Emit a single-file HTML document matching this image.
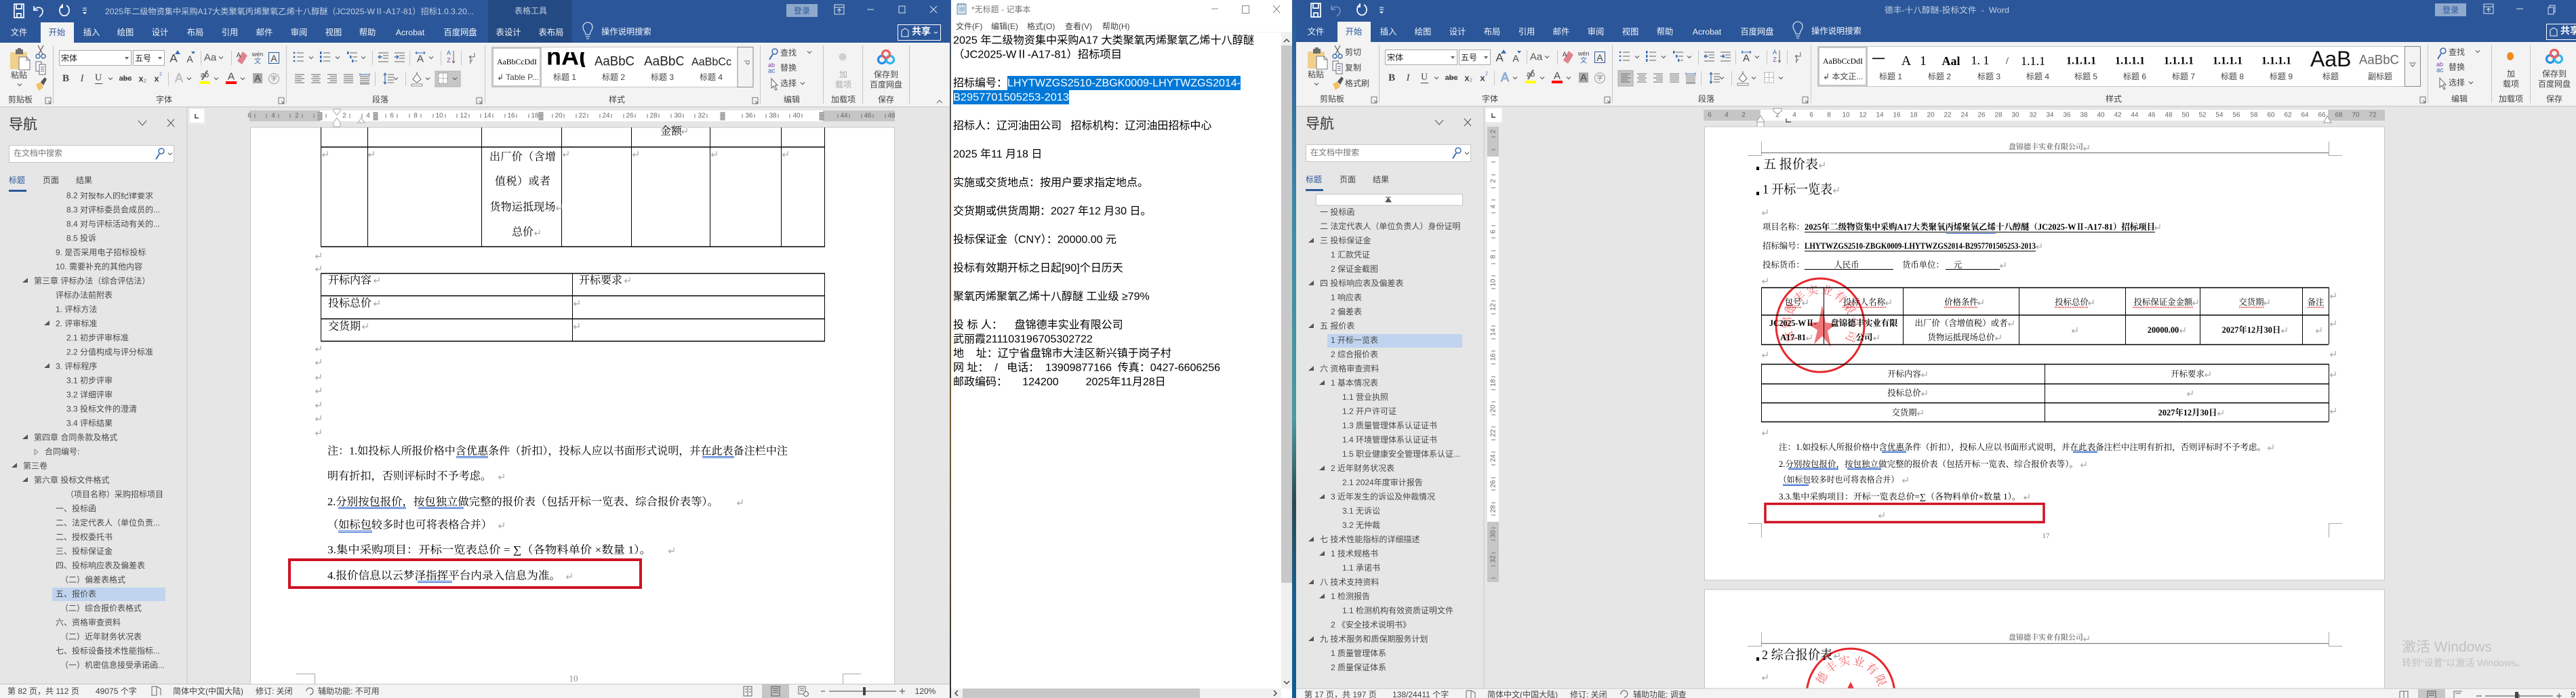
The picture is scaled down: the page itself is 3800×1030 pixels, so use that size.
<!DOCTYPE html>
<html lang="zh-CN"><head><meta charset="utf-8"><title>Word and Notepad</title>
<style>
html,body{margin:0;padding:0;width:3800px;height:1030px;overflow:hidden;background:#e6e6e6}
svg{display:block}
text{font-family:"Liberation Sans","Noto Sans CJK SC",sans-serif;font-size:12px;fill:#444;dominant-baseline:central;white-space:pre}
.m{text-anchor:middle}
.w{fill:#fff}
.t{fill:#c3cfe2}
.tab{fill:#f2f5fa;font-size:12.3px}
.tree{fill:#4a4a4a}
.gr{fill:#666;font-size:10px;text-anchor:middle}
.d{font-family:"Liberation Serif","Noto Serif CJK SC",serif;fill:#000;font-size:16px}
.s{font-family:"Liberation Serif","Noto Serif CJK SC",serif;fill:#000;font-size:12.4px}
.b{font-weight:700}
.h{font-family:"Liberation Serif","Noto Serif CJK SC",serif;fill:#000;font-size:19px}
.n{fill:#000;font-size:16px}
.l{stroke:#c6c6c6;fill:none}
.i{stroke:#666;fill:none;stroke-width:1.1}
.k{stroke:#000;fill:none;stroke-width:1}
.kk{stroke:#000;fill:none;stroke-width:1.6}
.cm{stroke:#a8a8a8;fill:none;stroke-width:1}
.so{font-family:"Liberation Serif","Noto Serif CJK SC",serif;fill:#222}
</style></head><body>
<svg width="3800" height="1030" viewBox="0 0 3800 1030" xmlns="http://www.w3.org/2000/svg">
<defs>
<linearGradient id="wp" x1="0" y1="0" x2="0" y2="1"><stop offset="0" stop-color="#2b579a"/><stop offset=".3" stop-color="#3d8aa8"/><stop offset=".6" stop-color="#4a9aa0"/><stop offset=".72" stop-color="#2a4a52"/><stop offset=".85" stop-color="#1a6090"/><stop offset="1" stop-color="#0f5c94"/></linearGradient>
<linearGradient id="wp2" x1="0" y1="0" x2="0" y2="1"><stop offset="0" stop-color="#2b579a"/><stop offset=".1" stop-color="#555"/><stop offset=".6" stop-color="#7c5a34"/><stop offset="1" stop-color="#333"/></linearGradient>
<pattern id="hatch" width="4" height="2" patternUnits="userSpaceOnUse"><rect width="4" height="1" fill="#777"/><rect y="1" width="4" height="1" fill="#ddd"/></pattern>

<path id="pm" d="M4 -4V1.5H-3.5M-3.5 1.5l2.8 -2.6M-3.5 1.5l2.8 2.6" fill="none" stroke="#a8a8a8" stroke-width="1.2"/>
<path id="cr" d="M-3 -1.5L0 1.5L3 -1.5" fill="none" stroke="#555" stroke-width="1.1"/>
<path id="lau" d="M-4 -5H4V4H-4ZM0 0L3.5 3.5M3.5 0.5V3.5H0.5" fill="none" stroke="#777" stroke-width="1"/>
<polygon id="tri" points="-4,3 4,3 4,-4" fill="#555"/>
<polygon id="tro" points="-2,-4 3,0 -2,4" fill="none" stroke="#888"/>

<g id="save"><path d="M-7 -10H7V10H-7Z M-4 -10V-3H4V-10 M-3 10V4H3V10" fill="none" stroke="#fff" stroke-width="1.7"/></g>
<g id="undo"><path d="M-6 -6L-6 0L0 0 M-6 0C-2 -6 7 -5 7 2C7 6 4 8 2 10" fill="none" stroke="#eef" stroke-width="1.8"/></g>
<g id="redo"><path d="M3 -8A7 8 0 1 1 -3 -8M-3 -10V-5H-7" fill="none" stroke="#fff" stroke-width="1.7"/></g>
<g id="cust"><path d="M-3 -4H3M-3 -1H3" stroke="#fff" fill="none"/><polygon points="-3,2 3,2 0,5" fill="#fff"/></g>
<g id="bulb"><path d="M-3 9H3M-2 12H2M-3 6C-3 2 -7 0 -7 -5A7 7 0 0 1 7 -5C7 0 3 2 3 6Z" fill="none" stroke="#eef2f8" stroke-width="1.1"/></g>

<g id="paste"><rect x="0" y="4" width="25" height="25" fill="#f1d08c" rx="1"/><rect x="8" y="0" width="11" height="7" fill="#6e6e6e"/><rect x="11" y="-2" width="5" height="4" fill="#6e6e6e"/><path d="M13 11H24L29 16V30H13Z" fill="#fff" stroke="#777"/><path d="M24 11V16H29" fill="none" stroke="#777"/></g>
<g id="cut"><circle cx="-4" cy="7" r="3" fill="none" stroke="#3a6aa8" stroke-width="1.4"/><circle cx="4" cy="7" r="3" fill="none" stroke="#3a6aa8" stroke-width="1.4"/><path d="M-3 4L4 -9M3 4L-4 -9" stroke="#666" stroke-width="1.3" fill="none"/></g>
<g id="copy"><path d="M-7 -9H1V5H-7Z" fill="#fff" stroke="#667"/><path d="M-2 -5H7V10H-2Z" fill="#fff" stroke="#667"/><path d="M0 -1H5M0 2H5M0 5H5" stroke="#557" fill="none"/></g>
<g id="fmt"><path d="M-7 2L0 -2L4 6L-3 11Z" fill="#f1c164"/><path d="M0 -2L6 -9L9 -6L4 3Z" fill="#555"/></g>

<g id="bul"><g fill="#3b6cb0"><circle cx="-7" cy="-6" r="1.4"/><circle cx="-7" cy="0" r="1.4"/><circle cx="-7" cy="6" r="1.4"/></g><path d="M-3 -6H7M-3 0H7M-3 6H7" class="i"/></g>
<g id="num"><g fill="#3b6cb0" font-size="6"><rect x="-8" y="-8" width="2.5" height="4"/><rect x="-8" y="-2" width="2.5" height="4"/><rect x="-8" y="4" width="2.5" height="4"/></g><path d="M-3 -6H7M-3 0H7M-3 6H7" class="i"/></g>
<g id="mul"><g fill="#3b6cb0"><rect x="-8" y="-8" width="2.5" height="4"/><rect x="-4" y="-2" width="2.5" height="4"/><rect x="-1" y="4" width="2.5" height="4"/></g><path d="M-4 -6H7M0 0H7M3 6H7" class="i"/></g>
<g id="out"><path d="M-7 -7H8M0 -3H8M0 1H8M-7 6H8" class="i"/><path d="M-1 -1H-7M-7 -1l3 -2.500M-7 -1l3 2.500" fill="none" stroke="#3b6cb0" stroke-width="1.4"/></g>
<g id="ind"><path d="M-7 -7H8M0 -3H8M0 1H8M-7 6H8" class="i"/><path d="M-7 -1H-1M-1 -1l-3 -2.500M-1 -1l-3 2.500" fill="none" stroke="#3b6cb0" stroke-width="1.4"/></g>
<g id="al"><path d="M-7 -6H7M-7 -3H3M-7 0H7M-7 3H3M-7 6H7" class="i"/></g>
<g id="ac"><path d="M-7 -6H7M-5 -3H5M-7 0H7M-5 3H5M-7 6H7" class="i"/></g>
<g id="ar"><path d="M-7 -6H7M-3 -3H7M-7 0H7M-3 3H7M-7 6H7" class="i"/></g>
<g id="aj"><path d="M-7 -6H7M-7 -3H7M-7 0H7M-7 3H7M-7 6H7" class="i"/></g>
<g id="ad"><path d="M-7 -3H7M-7 0H7M-7 3H7M-7 6H7M-7 8H7" class="i"/><path d="M-7 -8V-4M7 -8V-4M-6 -6H6" stroke="#3b6cb0" fill="none"/></g>
<g id="ls"><path d="M-1 -6H8M-1 -2H8M-1 2H8M-1 6H8" class="i"/><path d="M-5 -8V8M-7 -5L-5 -8L-3 -5M-7 5L-5 8L-3 5" fill="none" stroke="#3b6cb0" stroke-width="1.2"/></g>
<g id="fill"><path d="M-5 2L1 -6L7 2L1 7Z" fill="#fff" stroke="#666"/><path d="M1 -6V-9" stroke="#666"/><rect x="-7" y="9" width="16" height="3" fill="#fff" stroke="#888"/></g>
<g id="bord"><rect x="-6" y="-7" width="13" height="15" fill="#fff" stroke="#777" stroke-dasharray="1.5 1.5"/><path d="M-6 0.5H7M0.500 -7V8" stroke="#777" stroke-dasharray="1.5 1.5"/></g>

<g id="fontpara">
<path class="l" d="M296.500 75V96M341.500 75V96M248.500 106V127M549.500 75V96M604.500 75V96M650.500 75V96M680.500 75V96M553.500 106V127M598.500 106V127"/>
<text x="256" y="86" class="m" style="font-size:17px">A</text><polygon points="258,80 266,80 262,74" fill="#3b6cb0"/>
<text x="280" y="87" class="m" style="font-size:14px">A</text><polygon points="282,76 288,76 285,80" fill="#3b6cb0"/>
<text x="310" y="85" class="m" style="font-size:15px;fill:#555">Aa</text><use href="#cr" x="326" y="85"/>
<path d="M350 90L358 76L365 82L357 95Z" fill="#e0828d"/><text x="352" y="82" class="m" style="font-size:10px">A</text>
<text x="380" y="80" class="m" style="font-size:9px">wén</text><text x="380" y="91" class="m" style="font-size:10px;fill:#3b6cb0">文</text>
<rect x="396.500" y="77.500" width="15" height="16" fill="none" stroke="#2b579a"/><text x="404" y="86" class="m" style="font-size:14px">A</text>
<text x="97" y="116" class="m" style="font-family:'Liberation Serif';font-weight:700;font-size:15px">B</text>
<text x="121" y="116" class="m" style="font-family:'Liberation Serif';font-style:italic;font-size:15px">I</text>
<text x="145" y="115" class="m" style="font-family:'Liberation Serif';font-size:14px">U</text><path d="M140 123.500H151" stroke="#444"/><use href="#cr" x="163" y="116"/>
<text x="185" y="116" class="m" style="font-size:11px;font-weight:700">abc</text><path d="M177 116H194" stroke="#444"/>
<text x="208" y="116" class="m" style="font-size:13px;font-weight:700">x</text><text x="214" y="120" class="m" style="font-size:7px;fill:#3b6cb0">2</text>
<text x="231" y="116" class="m" style="font-size:13px;font-weight:700">x</text><text x="237" y="110" class="m" style="font-size:7px;fill:#3b6cb0">2</text>
<use href="#cr" x="279" y="116"/>
<text x="302" y="111" class="m" style="font-size:11px">ab</text><path d="M306 104L298 118" stroke="#777" stroke-width="2.400"/><rect x="294" y="120" width="16" height="4" fill="#ff0"/><use href="#cr" x="319" y="116"/>
<text x="341" y="113" class="m" style="font-size:15px">A</text><rect x="333" y="120" width="16" height="4" fill="#f00"/><use href="#cr" x="358" y="116"/>
<rect x="373" y="108" width="14" height="15" fill="#aaa"/><text x="380" y="115" class="m" style="font-size:14px">A</text>
<circle cx="404" cy="116" r="7.500" fill="none" stroke="#999"/><text x="404" y="116" class="m" style="font-size:9px;fill:#777">字</text>
<use href="#bul" x="441" y="84"/><use href="#cr" x="459" y="85"/><use href="#num" x="480" y="84"/><use href="#cr" x="498" y="85"/><use href="#mul" x="520" y="84"/><use href="#cr" x="536" y="85"/>
<use href="#out" x="565" y="85"/><use href="#ind" x="589" y="85"/>
<text x="620" y="87" class="m" style="font-size:15px">A</text><path d="M613 78h14M613 78l2 -2M613 78l2 2M627 78l-2 -2M627 78l-2 2" stroke="#3b6cb0" fill="none"/><use href="#cr" x="636" y="85"/>
<text x="662" y="78" class="m" style="font-size:9px;fill:#3b6cb0">A</text><text x="662" y="89" class="m" style="font-size:9px;fill:#7a3fa0">Z</text><path d="M669 75V93M667 90l2 3l2 -3" stroke="#666" fill="none"/>
<path d="M700 78V84H692M692 84l3 -2M692 84l3 2M697 88L693 92M694 86V94" stroke="#666" fill="none"/>
<use href="#al" x="442" y="116"/><use href="#ac" x="466" y="116"/><use href="#ar" x="490" y="116"/><use href="#aj" x="514" y="116"/><use href="#ad" x="538" y="116"/>
<use href="#ls" x="573" y="116"/><use href="#cr" x="584" y="116"/><use href="#fill" x="614" y="115"/><use href="#cr" x="631" y="116"/>
<use href="#bord" x="653" y="115"/><use href="#cr" x="671" y="116"/>
</g>

<g id="edit">
<circle cx="3" cy="-3" r="4" fill="none" stroke="#3b6cb0" stroke-width="1.500"/><path d="M0 1L-5 9" stroke="#3b6cb0" stroke-width="2"/>
</g>
<g id="baidu"><circle cx="-6" cy="4" r="5.500" fill="none" stroke="#2a8ae6" stroke-width="3.200"/><circle cx="6" cy="4" r="5.500" fill="none" stroke="#2fb6ea" stroke-width="3.200"/><circle cx="0" cy="-4" r="5.500" fill="none" stroke="#e8605e" stroke-width="3.200"/></g>
<g id="ri"><path d="M-7 -7H7V7H-7ZM-7 -3H7M-3 2L0 -1L3 2M0 -1V5" fill="none" stroke="#dbe3ef"/></g>
<g id="stamp" style="mix-blend-mode:multiply">
<ellipse cx="0" cy="0" rx="65" ry="69" fill="none" stroke="#e8262c" stroke-width="3"/>
<path id="arc1" d="M-34 26A43 45 0 1 1 34 26" fill="none"/>
<text style="font-size:17px;fill:#ee6a70;font-family:'Noto Serif CJK SC',serif;dominant-baseline:auto"><textPath href="#arc1" startOffset="2%" letter-spacing="2">盘锦德丰实业有限公司</textPath></text>
<polygon points="3,-30 8,-4 24,-2 11,8 16,32 3,16 -9,28 -4,7 -20,-3 -2,-5" fill="#e83a40" opacity=".7"/>
</g>
</defs>

<!-- ======= LEFT WORD WINDOW ======= -->
<rect x="0" y="0" width="1401" height="1030" fill="#e6e6e6"/>
<rect x="0" y="0" width="1401" height="63" fill="#2b579a"/>
<rect x="720" y="0" width="124" height="63" fill="#244a84"/>
<use href="#save" x="28" y="16"/><use href="#undo" x="56" y="15"/><use href="#cr" x="73" y="15" style="opacity:.6"/><use href="#redo" x="95" y="16"/><use href="#cust" x="125" y="16"/>
<text class="t" x="155" y="17" textLength="544" lengthAdjust="spacingAndGlyphs">2025年二级物资集中采购A17大类聚氧丙烯聚氧乙烯十八醇醚（JC2025-WⅡ-A17-81）招标1.0.3.20...</text>
<text class="t m" x="783" y="16">表格工具</text>
<rect x="60" y="33" width="49" height="30" fill="#f3f3f3"/>
<g class="tabs">
<text class="tab m" x="28" y="48">文件</text><text class="m" x="84" y="48" style="fill:#2b579a;font-size:12.300px">开始</text><text class="tab m" x="135" y="48">插入</text><text class="tab m" x="185" y="48">绘图</text><text class="tab m" x="236" y="48">设计</text><text class="tab m" x="288" y="48">布局</text><text class="tab m" x="339" y="48">引用</text><text class="tab m" x="390" y="48">邮件</text><text class="tab m" x="441" y="48">审阅</text><text class="tab m" x="492" y="48">视图</text><text class="tab m" x="542" y="48">帮助</text><text class="tab m" x="605" y="48">Acrobat</text><text class="tab m" x="679" y="48">百度网盘</text><text class="tab m" x="750" y="48">表设计</text><text class="tab m" x="813" y="48">表布局</text>
<text class="tab" x="887" y="47">操作说明搜索</text>
</g>
<use href="#bulb" x="867" y="45"/>
<rect x="1160" y="6" width="46" height="19" fill="#8fa9cc"/><text class="m" x="1183" y="16" style="fill:#2b579a">登录</text>
<use href="#ri" x="1238" y="14"/><path d="M1279 14H1289" stroke="#dbe3ef"/><rect x="1326" y="9" width="9" height="10" fill="none" stroke="#dbe3ef"/><path d="M1372 9L1382 19M1382 9L1372 19" stroke="#dbe3ef"/>
<rect x="1324.500" y="36.500" width="63" height="23" fill="none" stroke="#fff"/><path d="M1330 45L1335 42L1340 45V54H1330Z" fill="none" stroke="#fff"/><text class="w" x="1345" y="46" style="font-size:14px;font-weight:700">共享</text><path d="M1378 47l2.500 2l2.500 -2" stroke="#fff" fill="none"/>

<rect x="0" y="63" width="1401" height="94" fill="#f3f3f3"/><rect x="0" y="157" width="1401" height="1.500" fill="#d0d0d0"/>
<path class="l" d="M78.500 67V153M422.500 67V153M715.500 67V153M1121.500 67V153M1214.500 67V153M1272.500 67V153M1341.500 67V153"/>
<use href="#paste" x="15" y="73"/><text class="m" x="28" y="111">粘贴</text><use href="#cr" x="29" y="125"/>
<use href="#cut" x="60" y="76"/><use href="#copy" x="60" y="100"/><use href="#fmt" x="60" y="123"/>
<rect x="87.500" y="74.500" width="106" height="22" fill="#fff" stroke="#aaa"/><text x="90" y="86" style="fill:#222">宋体</text><polygon points="184,84 190,84 187,88" fill="#666"/>
<rect x="196.500" y="74.500" width="46" height="22" fill="#fff" stroke="#aaa"/><text x="199" y="86" style="fill:#222">五号</text><polygon points="233,84 239,84 236,88" fill="#666"/>
<rect x="642" y="105" width="37" height="23" fill="#c6c6c6" stroke="#b0b0b0"/>
<text class="m" x="264" y="115" style="font-size:18px;fill:#ccc;stroke:#aaa;stroke-width:.5">A</text><use href="#cr" x="279" y="116" style="opacity:.5"/>
<use href="#fontpara"/>
<text class="m" x="30" y="147">剪贴板</text><text class="m" x="242" y="147">字体</text><text class="m" x="561" y="147">段落</text><text class="m" x="910" y="147">样式</text><text class="m" x="1168" y="147">编辑</text><text class="m" x="1244" y="147">加载项</text><text class="m" x="1307" y="147">保存</text>
<use href="#lau" x="71" y="149"/><use href="#lau" x="415" y="149"/><use href="#lau" x="707" y="149"/><use href="#lau" x="1114" y="149"/>
<path d="M1382 152l4 -4l4 4" stroke="#666" fill="none"/>
<!-- gallery -->
<rect x="725.500" y="69.500" width="385" height="59" fill="#fff" stroke="#c6c6c6"/><rect x="726.500" y="70.500" width="71" height="57" fill="#fff" stroke="#c6c6c6" stroke-width="3"/>
<rect x="1088" y="69.500" width="23" height="59" fill="#f3f3f3" stroke="#888"/><path d="M1100 92l3 3l3 -3M1098 90h8" stroke="#666" fill="none"/>
<text x="733" y="91" textLength="59" lengthAdjust="spacingAndGlyphs" style="font-family:'Liberation Serif';font-size:12px;fill:#000">AaBbCcDdI</text>
<text x="733" y="114">↲ Table P...</text>
<svg x="806" y="77" width="58" height="22"><text x="0" y="6" style="font-family:'Liberation Sans';font-weight:700;font-size:36px;fill:#000">nA(</text></svg>
<text class="m" x="833" y="114">标题 1</text>
<text x="877" y="91" textLength="59" lengthAdjust="spacingAndGlyphs" style="font-size:19px;fill:#222">AaBbC</text><text class="m" x="905" y="114">标题 2</text>
<svg x="950" y="75" width="58" height="32"><text x="0" y="16" style="font-size:19px;fill:#222">AaBbC(</text></svg><text class="m" x="977" y="114">标题 3</text>
<text x="1020" y="91" textLength="59" lengthAdjust="spacingAndGlyphs" style="font-size:17px;fill:#222">AaBbCc</text><text class="m" x="1049" y="114">标题 4</text>
<!-- edit -->
<use href="#edit" x="1140" y="79"/><text x="1151" y="78">查找</text><use href="#cr" x="1194" y="77"/>
<text x="1133" y="96" style="font-size:9px;fill:#7a3fa0">ab</text><text x="1133" y="105" style="font-size:10px;fill:#3b6cb0">ac</text><text x="1151" y="100">替换</text>
<path d="M1138 116V130L1141 127L1144 133L1146 132L1143 126H1147Z" fill="#fff" stroke="#666"/><text x="1151" y="123">选择</text><use href="#cr" x="1184" y="123"/>
<circle cx="1243" cy="84" r="5.500" fill="#d0d0d0"/><text class="m" x="1244" y="110" style="fill:#aaa">加</text><text class="m" x="1244" y="125" style="fill:#aaa">载项</text>
<use href="#baidu" x="1307" y="84"/><text class="m" x="1307" y="110">保存到</text><text class="m" x="1307" y="125">百度网盘</text>

<!-- nav left -->
<path class="l" d="M276 158V1010"/>
<text x="13" y="184" style="font-size:21px;fill:#333">导航</text>
<path d="M204 178l6 7l6 -7M247 176l10 11M257 176l-10 11" stroke="#555" fill="none"/>
<rect x="13.500" y="214.500" width="243" height="25" fill="#fff" stroke="#c6c6c6"/><text x="20" y="226" style="fill:#777">在文档中搜索</text>
<use href="#edit" x="235" y="226"/><use href="#cr" x="251" y="227"/>
<text x="13" y="266" style="fill:#2b579a">标题</text><text x="63" y="266">页面</text><text x="112" y="266">结果</text><rect x="13" y="280" width="26" height="3" fill="#2b579a"/>
<svg x="0" y="284" width="275" height="726">
<rect x="77" y="583" width="167" height="20" fill="#c0d4f0"/>
<g transform="translate(0,-284)">
<text class="tree" x="98" y="288.500">8.2 对投标人的纪律要求</text>
<text class="tree" x="98" y="309.500">8.3 对评标委员会成员的...</text>
<text class="tree" x="98" y="330.500">8.4 对与评标活动有关的...</text>
<text class="tree" x="98" y="351.500">8.5 投诉</text>
<text class="tree" x="82" y="372.500">9. 是否采用电子招标投标</text>
<text class="tree" x="82" y="393.500">10. 需要补充的其他内容</text>
<use href="#tri" x="37" y="414"/><text class="tree" x="50" y="414.500">第三章 评标办法（综合评估法）</text>
<text class="tree" x="82" y="435.500">评标办法前附表</text>
<text class="tree" x="82" y="456.500">1. 评标方法</text>
<use href="#tri" x="69" y="477"/><text class="tree" x="82" y="477.500">2. 评审标准</text>
<text class="tree" x="98" y="498.500">2.1 初步评审标准</text>
<text class="tree" x="98" y="519.500">2.2 分值构成与评分标准</text>
<use href="#tri" x="69" y="540"/><text class="tree" x="82" y="540.500">3. 评标程序</text>
<text class="tree" x="98" y="561.500">3.1 初步评审</text>
<text class="tree" x="98" y="582.500">3.2 详细评审</text>
<text class="tree" x="98" y="603.500">3.3 投标文件的澄清</text>
<text class="tree" x="98" y="624.500">3.4 评标结果</text>
<use href="#tri" x="37" y="645"/><text class="tree" x="50" y="645.500">第四章 合同条款及格式</text>
<use href="#tro" x="53" y="667"/><text class="tree" x="66" y="666.500">合同编号:</text>
<use href="#tri" x="21" y="687"/><text class="tree" x="34" y="687.500">第三卷</text>
<use href="#tri" x="37" y="708"/><text class="tree" x="50" y="708.500">第六章 投标文件格式</text>
<text class="tree" x="97" y="729.500">（项目名称）采购招标项目</text>
<text class="tree" x="82" y="750.500">一、投标函</text>
<text class="tree" x="82" y="771.500">二、法定代表人（单位负责...</text>
<text class="tree" x="82" y="792.500">二、授权委托书</text>
<text class="tree" x="82" y="813.500">三、投标保证金</text>
<text class="tree" x="82" y="834.500">四、投标响应表及偏差表</text>
<text class="tree" x="89" y="855.500">（二）偏差表格式</text>
<text class="tree" x="82" y="876.500">五、报价表</text>
<text class="tree" x="89" y="897.500">（二）综合报价表格式</text>
<text class="tree" x="82" y="918.500">六、资格审查资料</text>
<text class="tree" x="89" y="939.500">（二）近年财务状况表</text>
<text class="tree" x="82" y="960.500">七、投标设备技术性能指标...</text>
<text class="tree" x="89" y="981.500">（一）机密信息接受承诺函...</text>
</g></svg>

<!-- ruler left -->
<rect x="277" y="159" width="27" height="25" fill="#ebebeb"/><rect x="280" y="161" width="21" height="20" fill="#fff"/><path d="M288 168V174H293" stroke="#444" stroke-width="1.500" fill="none"/>
<rect x="368" y="163" width="952" height="16" fill="#fff"/><rect x="368" y="163" width="104" height="16" fill="#c6c6c6"/><rect x="1214" y="163" width="106" height="16" fill="#c6c6c6"/>
<g>
<text class="gr" x="368" y="171">6</text><text class="gr" x="403" y="171">4</text><text class="gr" x="438" y="171">2</text><text class="gr" x="508" y="171">2</text><text class="gr" x="543" y="171">4</text><text class="gr" x="578" y="171">6</text><text class="gr" x="613" y="171">8</text><text class="gr" x="648" y="171">10</text><text class="gr" x="684" y="171">12</text><text class="gr" x="719" y="171">14</text><text class="gr" x="754" y="171">16</text><text class="gr" x="789" y="171">18</text><text class="gr" x="824" y="171">20</text><text class="gr" x="859" y="171">22</text><text class="gr" x="894" y="171">24</text><text class="gr" x="929" y="171">26</text><text class="gr" x="964" y="171">28</text><text class="gr" x="1000" y="171">30</text><text class="gr" x="1035" y="171">32</text><text class="gr" x="1105" y="171">36</text><text class="gr" x="1140" y="171">38</text><text class="gr" x="1175" y="171">40</text><text class="gr" x="1245" y="171">44</text><text class="gr" x="1280" y="171">46</text><text class="gr" x="1315" y="171">48</text>
</g>
<path d="M376 168v6M393 168v6M411 168v6M428 168v6M446 168v6M463 168v6M481 168v6M516 168v6M534 168v6M551 168v6M569 168v6M586 168v6M604 168v6M621 168v6M639 168v6M657 168v6M674 168v6M692 168v6M709 168v6M727 168v6M745 168v6M762 168v6M780 168v6M797 168v6M815 168v6M832 168v6M850 168v6M867 168v6M885 168v6M902 168v6M920 168v6M937 168v6M955 168v6M972 168v6M990 168v6M1008 168v6M1025 168v6M1043 168v6M1095 168v6M1113 168v6M1130 168v6M1148 168v6M1165 168v6M1183 168v6M1236 168v6M1253 168v6M1271 168v6M1288 168v6M1306 168v6" stroke="#777"/>
<g fill="url(#hatch)" stroke="#999"><rect x="469" y="166" width="6" height="11"/><rect x="551" y="166" width="6" height="11"/><rect x="795" y="166" width="6" height="11"/><rect x="1063" y="166" width="6" height="11"/><rect x="1209" y="166" width="6" height="11"/></g>
<path d="M492 161H502V164L497 170L492 164ZM492 181L497 174L502 181V187H492Z" fill="#fff" stroke="#aaa"/><path d="M528 181L533 174L538 181Z" fill="#fff" stroke="#aaa"/>

<!-- left page -->
<rect x="369.500" y="188" width="950" height="822" fill="#fff" stroke="#c6c6c6"/>
<g>
<path class="k" d="M473.500 188V364M542.500 188V364M710.500 188V364M828.500 188V364M931.500 188V364M1047.500 188V364M1152.500 188V364M1216.500 188V364"/>
<path class="kk" d="M473 217H1217M473 364H1217"/>
<text class="d m" x="990" y="194">金额</text><use href="#pm" x="1009" y="193"/>
<text class="d m" x="771" y="232" textLength="98">出厂价（含增</text><text class="d m" x="771" y="268" textLength="82">值税）或者</text><text class="d m" x="771" y="306" textLength="97">货物运抵现场</text><text class="d m" x="771" y="343">总价</text>
<use href="#pm" x="479" y="227"/><use href="#pm" x="547" y="227"/><use href="#pm" x="834" y="227"/><use href="#pm" x="937" y="227"/><use href="#pm" x="1053" y="227"/><use href="#pm" x="1158" y="227"/><use href="#pm" x="824" y="306"/><use href="#pm" x="792" y="343"/>
<use href="#pm" x="469" y="377"/><use href="#pm" x="469" y="396"/>
<path class="kk" d="M473 403.500H1217M473 436.500H1217M473 470.500H1217M473 503.500H1217"/>
<path class="k" d="M473.500 403V503M844.500 403V503M1216.500 403V503"/>
<text class="d" x="484" y="414">开标内容</text><use href="#pm" x="555" y="413"/><text class="d" x="854" y="414">开标要求</text><use href="#pm" x="925" y="413"/>
<text class="d" x="484" y="448">投标总价</text><use href="#pm" x="555" y="447"/><use href="#pm" x="850" y="447"/>
<text class="d" x="484" y="482">交货期</text><use href="#pm" x="538" y="481"/><use href="#pm" x="850" y="481"/>
<use href="#pm" x="469" y="514"/><use href="#pm" x="469" y="534"/><use href="#pm" x="469" y="556"/><use href="#pm" x="469" y="576"/><use href="#pm" x="469" y="597"/><use href="#pm" x="469" y="617"/><use href="#pm" x="469" y="638"/>
<text class="d" x="483" y="666" textLength="679" lengthAdjust="spacingAndGlyphs">注：1.如投标人所报价格中含优惠条件（折扣），投标人应以书面形式说明，并在此表备注栏中注</text>
<text class="d" x="483" y="703" textLength="242" lengthAdjust="spacingAndGlyphs">明有折扣，否则评标时不予考虑。</text><use href="#pm" x="739" y="703"/>
<text class="d" x="483" y="741" textLength="577" lengthAdjust="spacingAndGlyphs">2.分别按包报价，按包独立做完整的报价表（包括开标一览表、综合报价表等）。</text><use href="#pm" x="1091" y="741"/>
<text class="d" x="483" y="775" textLength="243" lengthAdjust="spacingAndGlyphs">（如标包较多时也可将表格合并）</text><use href="#pm" x="739" y="775"/>
<text class="d" x="483" y="812" textLength="478" lengthAdjust="spacingAndGlyphs">3.集中采购项目：开标一览表总价 = ∑（各物料单价 ×数量 1）。</text><use href="#pm" x="990" y="812"/>
<text class="d" x="483" y="850" textLength="344" lengthAdjust="spacingAndGlyphs">4.报价信息以云梦泽指挥平台内录入信息为准。</text><use href="#pm" x="839" y="850"/>
<g fill="none" stroke="#2b62cc" stroke-width="1">
<path d="M673 675.500H720M673 673.500H720M1036 675.500H1083M1036 673.500H1083M499 750.500H599M499 748.500H599M617 750.500H684M617 748.500H684M499 785.500H549M499 783.500H549M616 859.500H667M616 857.500H667"/></g>
<rect x="427" y="826" width="518" height="41" fill="none" stroke="#cf1224" stroke-width="4"/>
<path class="cm" d="M437 994.500H464.500V1010M1270 994.500H1243.500V1010"/>
<text class="m" x="846" y="1001" style="font-family:'Liberation Serif';font-size:13px;fill:#888">10</text>
</g>

<!-- left status -->
<rect x="0" y="1009.500" width="1401" height="20.500" fill="#f3f3f3"/><path class="l" d="M0 1009.500H1401"/>
<text x="11" y="1020">第 82 页，共 112 页</text><text x="141" y="1020">49075 个字</text>
<path d="M224 1013H231V1026H224ZM231 1013L237 1016V1026" fill="none" stroke="#666"/>
<text x="255" y="1020">简体中文(中国大陆)</text><text x="377" y="1020">修订: 关闭</text>
<path d="M452 1020a5 5 0 1 1 5 5" fill="none" stroke="#555"/><text x="469" y="1020">辅助功能: 不可用</text>
<path d="M1097 1013H1109V1027H1097ZM1103 1013V1027M1099 1017H1102M1099 1021H1102M1105 1017H1108M1105 1021H1108" fill="none" stroke="#666"/>
<rect x="1124" y="1010" width="40" height="20" fill="#c6c6c6"/><path d="M1138 1013H1150V1027H1138ZM1140 1016H1148M1140 1019H1148M1140 1022H1148" fill="none" stroke="#555"/>
<path d="M1178 1013H1188V1024H1178ZM1180 1016H1186M1180 1019H1186" fill="none" stroke="#666"/><circle cx="1189" cy="1024" r="3.500" fill="#f3f3f3" stroke="#666"/>
<path d="M1211 1020H1217M1223 1020H1322M1327 1020H1335M1331 1016V1024" stroke="#444"/><rect x="1273" y="1014" width="4" height="12" fill="#444"/>
<text class="m" x="1365" y="1020">120%</text>

<!-- strip between -->
<rect x="1401" y="0" width="2" height="1030" fill="url(#wp2)"/>

<!-- ======= NOTEPAD ======= -->
<rect x="1403" y="0" width="503" height="1030" fill="#fff"/>
<path d="M1412 6H1425V21H1412Z" fill="#cfe2ee" stroke="#6a8ba5"/><path d="M1414 4V8M1418 4V8M1422 4V8M1415 12H1423M1415 15H1423" stroke="#6a8ba5" fill="none"/>
<text x="1433" y="14" style="fill:#777">*无标题 - 记事本</text>
<path d="M1787 13H1797M1832.500 8.500H1842.500V19.500H1832.500ZM1878 8L1888 19M1888 8L1878 19" stroke="#888" fill="none"/>
<text x="1410" y="39">文件(F)</text><text x="1462" y="39">编辑(E)</text><text x="1515" y="39">格式(O)</text><text x="1571" y="39">查看(V)</text><text x="1626" y="39">帮助(H)</text>
<path d="M1403 47.500H1906" stroke="#f0f0f0"/>
<rect x="1486" y="112" width="344" height="21" fill="#0078d7"/><rect x="1406" y="133" width="171" height="21" fill="#0078d7"/>
<text class="n" x="1406" y="60" textLength="444" lengthAdjust="spacingAndGlyphs">2025 年二级物资集中采购A17 大类聚氧丙烯聚氧乙烯十八醇醚</text>
<text class="n" x="1406" y="81" textLength="249" lengthAdjust="spacingAndGlyphs">（JC2025-WⅡ-A17-81）招标项目</text>
<text class="n" x="1406" y="123">招标编号：</text>
<text class="n w" x="1486" y="123" textLength="344" lengthAdjust="spacingAndGlyphs" style="fill:#fff">LHYTWZGS2510-ZBGK0009-LHYTWZGS2014-</text>
<text class="n" x="1406" y="144" textLength="171" lengthAdjust="spacingAndGlyphs" style="fill:#fff">B2957701505253-2013</text>
<text class="n" x="1406" y="186">招标人：辽河油田公司   招标机构：辽河油田招标中心</text>
<text class="n" x="1406" y="228">2025 年11 月18 日</text>
<text class="n" x="1406" y="270">实施或交货地点：按用户要求指定地点。</text>
<text class="n" x="1406" y="312">交货期或供货周期：2027 年12 月30 日。</text>
<text class="n" x="1406" y="354">投标保证金（CNY）：20000.00 元</text>
<text class="n" x="1406" y="396">投标有效期开标之日起[90]个日历天</text>
<text class="n" x="1406" y="438">聚氧丙烯聚氧乙烯十八醇醚 工业级 ≥79%</text>
<text class="n" x="1406" y="480">投 标 人：    盘锦德丰实业有限公司</text>
<text class="n" x="1406" y="501">武丽霞211103196705302722</text>
<text class="n" x="1406" y="522">地    址：辽宁省盘锦市大洼区新兴镇于岗子村</text>
<text class="n" x="1406" y="543">网 址：  /   电话：  13909877166  传真：0427-6606256</text>
<text class="n" x="1406" y="564">邮政编码：     124200         2025年11月28日</text>
<rect x="1890" y="48" width="16" height="968" fill="#f0f0f0"/><rect x="1890" y="67" width="16" height="793" fill="#c8c8c8"/>
<path d="M1894 62l4 -4l4 4M1894 1005l4 4l4 -4" stroke="#444" fill="none" stroke-width="1.500"/>
<rect x="1403" y="1016" width="487" height="14" fill="#f0f0f0"/><rect x="1420" y="1016" width="350" height="14" fill="#c8c8c8"/>
<path d="M1413 1019l-4 4l4 4M1879 1019l4 4l-4 4" stroke="#444" fill="none" stroke-width="1.500"/>

<rect x="1906" y="0" width="6" height="1030" fill="url(#wp)"/>

<!-- ======= RIGHT WORD WINDOW ======= -->
<rect x="1912" y="0" width="1888" height="1030" fill="#e6e6e6"/>
<rect x="1912" y="0" width="1888" height="62" fill="#2b579a"/>
<use href="#save" x="1941" y="15"/><use href="#undo" x="1970" y="14" style="opacity:.35"/><use href="#cr" x="1987" y="14" style="opacity:.35"/><use href="#redo" x="2009" y="15"/><use href="#cust" x="2038" y="15"/>
<text class="t" x="2780" y="15" textLength="184" lengthAdjust="spacingAndGlyphs">德丰-十八醇醚-投标文件  -  Word</text>
<rect x="1973" y="32" width="49" height="30" fill="#f3f3f3"/>
<text class="tab m" x="1941" y="47">文件</text><text class="m" x="1997" y="47" style="fill:#2b579a;font-size:12.300px">开始</text><text class="tab m" x="2048" y="47">插入</text><text class="tab m" x="2099" y="47">绘图</text><text class="tab m" x="2150" y="47">设计</text><text class="tab m" x="2201" y="47">布局</text><text class="tab m" x="2252" y="47">引用</text><text class="tab m" x="2303" y="47">邮件</text><text class="tab m" x="2354" y="47">审阅</text><text class="tab m" x="2405" y="47">视图</text><text class="tab m" x="2456" y="47">帮助</text><text class="tab m" x="2518" y="47">Acrobat</text><text class="tab m" x="2592" y="47">百度网盘</text>
<use href="#bulb" x="2652" y="44"/><text class="tab" x="2672" y="46">操作说明搜索</text>
<rect x="3592" y="5" width="46" height="19" fill="#8fa9cc"/><text class="m" x="3615" y="15" style="fill:#2b579a">登录</text>
<use href="#ri" x="3671" y="13"/><path d="M3712 13H3722" stroke="#dbe3ef"/><path d="M3759 11H3767V21H3759ZM3761 11V8H3769V18H3767" fill="none" stroke="#dbe3ef"/>
<rect x="3756.500" y="35.500" width="60" height="23" fill="none" stroke="#fff"/><path d="M3762 44L3767 41L3772 44V53H3762Z" fill="none" stroke="#fff"/><text class="w" x="3777" y="45" style="font-size:14px;font-weight:700">共享</text>

<rect x="1912" y="62" width="1888" height="94" fill="#f3f3f3"/><rect x="1912" y="156" width="1888" height="1.500" fill="#d0d0d0"/>
<path class="l" d="M2034.500 66V152M2378.500 66V152M2671.500 66V152M3581.500 66V152M3675.500 66V152M3732.500 66V152"/>
<use href="#paste" x="1929" y="72"/><text class="m" x="1941" y="110">粘贴</text><use href="#cr" x="1942" y="124"/>
<use href="#cut" x="1973" y="76"/><text x="1984" y="77">剪切</text><use href="#copy" x="1973" y="99"/><text x="1984" y="100">复制</text><use href="#fmt" x="1973" y="122"/><text x="1984" y="123">格式刷</text>
<rect x="2043.500" y="73.500" width="106" height="22" fill="#fff" stroke="#aaa"/><text x="2046" y="85" style="fill:#222">宋体</text><polygon points="2140,83 2146,83 2143,87" fill="#666"/>
<rect x="2152.500" y="73.500" width="46" height="22" fill="#fff" stroke="#aaa"/><text x="2155" y="85" style="fill:#222">五号</text><polygon points="2189,83 2195,83 2192,87" fill="#666"/>
<rect x="2387" y="104" width="22" height="23" fill="#c6c6c6" stroke="#aaa"/>
<text class="m" x="2220" y="114" style="font-size:18px;fill:#cfe0f6;stroke:#3b6cb0;stroke-width:.6">A</text>
<use href="#fontpara" transform="translate(1956,-1)"/>
<text class="m" x="1965" y="146">剪贴板</text><text class="m" x="2198" y="146">字体</text><text class="m" x="2517" y="146">段落</text><text class="m" x="3118" y="146">样式</text><text class="m" x="3628" y="146">编辑</text><text class="m" x="3704" y="146">加载项</text><text class="m" x="3768" y="146">保存</text>
<use href="#lau" x="2027" y="148"/><use href="#lau" x="2371" y="148"/><use href="#lau" x="2663" y="148"/><use href="#lau" x="3574" y="148"/>
<!-- gallery -->
<rect x="2681.500" y="68.500" width="889" height="59" fill="#fff" stroke="#c6c6c6"/><rect x="2682.500" y="69.500" width="71" height="57" fill="#fff" stroke="#c6c6c6" stroke-width="3"/>
<rect x="3547.500" y="68.500" width="23" height="59" fill="#f3f3f3" stroke="#888"/><path d="M3556 95l3 3l3 -3M3554 93h10" stroke="#666" fill="none"/>
<text x="2689" y="90" textLength="59" lengthAdjust="spacingAndGlyphs" style="font-family:'Liberation Serif';font-size:12px;fill:#000">AaBbCcDdI</text>
<text x="2689" y="113">↲ 本文正...</text>
<text class="m" x="2771" y="88" style="font-family:'Liberation Serif';font-size:20px;fill:#000">一</text><text class="m" x="2812" y="90" style="font-family:'Liberation Serif';font-size:20px;fill:#000">A</text><text class="m" x="2837" y="90" style="font-family:'Liberation Serif';font-size:20px;fill:#000">1</text>
<text class="m" x="2789" y="113">标题 1</text>
<text class="m" x="2878" y="90" style="font-family:'Liberation Serif';font-size:18px;fill:#000;font-weight:700">Aal</text><text class="m" x="2861" y="113">标题 2</text>
<text class="m" x="2921" y="89" style="font-family:'Liberation Serif';font-size:18px;fill:#000">1. 1</text><text class="m" x="2934" y="113">标题 3</text>
<text class="m" x="2961" y="90" style="font-family:'Liberation Serif';font-size:15px;fill:#000">/</text><text class="m" x="2999" y="90" style="font-family:'Liberation Serif';font-size:18px;fill:#000">1.1.1</text><text class="m" x="3006" y="113">标题 4</text>
<g style="font-family:'Liberation Serif'"><svg x="3048" y="78" width="58" height="24"><text x="0" y="12" style="font-family:'Liberation Serif';font-size:16px;fill:#000;font-weight:700">1.1.1.1</text></svg><svg x="3120" y="78" width="58" height="24"><text x="0" y="12" style="font-family:'Liberation Serif';font-size:16px;fill:#000;font-weight:700">1.1.1.1</text></svg><svg x="3192" y="78" width="58" height="24"><text x="0" y="12" style="font-family:'Liberation Serif';font-size:16px;fill:#000;font-weight:700">1.1.1.1</text></svg><svg x="3264" y="78" width="58" height="24"><text x="0" y="12" style="font-family:'Liberation Serif';font-size:16px;fill:#000;font-weight:700">1.1.1.1</text></svg><svg x="3336" y="78" width="58" height="24"><text x="0" y="12" style="font-family:'Liberation Serif';font-size:16px;fill:#000;font-weight:700">1.1.1.1</text></svg></g>
<text class="m" x="3077" y="113">标题 5</text><text class="m" x="3149" y="113">标题 6</text><text class="m" x="3221" y="113">标题 7</text><text class="m" x="3293" y="113">标题 8</text><text class="m" x="3365" y="113">标题 9</text>
<svg x="3408" y="72" width="60" height="30"><text x="0" y="15" style="font-size:32px;fill:#111">AaB</text></svg><text class="m" x="3438" y="113">标题</text>
<text x="3480" y="89" textLength="59" lengthAdjust="spacingAndGlyphs" style="font-size:19px;fill:#666">AaBbC</text><text class="m" x="3511" y="113">副标题</text>
<use href="#edit" x="3601" y="78"/><text x="3612" y="77">查找</text><use href="#cr" x="3655" y="76"/>
<text x="3594" y="95" style="font-size:9px;fill:#7a3fa0">ab</text><text x="3594" y="104" style="font-size:10px;fill:#3b6cb0">ac</text><text x="3612" y="99">替换</text>
<path d="M3599 115V129L3602 126L3605 132L3607 131L3604 125H3608Z" fill="#fff" stroke="#666"/><text x="3612" y="122">选择</text><use href="#cr" x="3645" y="122"/>
<ellipse cx="3703" cy="83" rx="5" ry="6" fill="#f08a1c"/><text class="m" x="3704" y="109">加</text><text class="m" x="3704" y="124">载项</text>
<use href="#baidu" x="3768" y="83"/><text class="m" x="3768" y="109">保存到</text><text class="m" x="3768" y="124">百度网盘</text>

<!-- nav right -->
<path class="l" d="M2189 157V1016"/>
<text x="1926" y="183" style="font-size:21px;fill:#333">导航</text>
<path d="M2117 177l6 7l6 -7M2160 175l10 11M2170 175l-10 11" stroke="#555" fill="none"/>
<rect x="1926.500" y="213.500" width="243" height="25" fill="#fff" stroke="#c6c6c6"/><text x="1933" y="225" style="fill:#777">在文档中搜索</text>
<use href="#edit" x="2148" y="225"/><use href="#cr" x="2164" y="226"/>
<text x="1926" y="265" style="fill:#2b579a">标题</text><text x="1976" y="265">页面</text><text x="2025" y="265">结果</text><rect x="1926" y="279" width="26" height="3" fill="#2b579a"/>
<rect x="1941.500" y="286.500" width="216" height="16.500" fill="#fff" stroke="#c6c6c6"/><path d="M2044 291H2052M2048 292L2044 298H2052Z" stroke="#555" fill="#555"/>
<rect x="1958" y="493" width="199" height="20" fill="#c0d4f0"/>
<text class="tree" x="1947" y="313">一 投标函</text>
<text class="tree" x="1947" y="334">二 法定代表人（单位负责人）身份证明</text>
<use href="#tri" x="1934" y="355"/><text class="tree" x="1947" y="355">三 投标保证金</text>
<text class="tree" x="1963" y="376">1 汇款凭证</text>
<text class="tree" x="1963" y="397">2 保证金截图</text>
<use href="#tri" x="1934" y="418"/><text class="tree" x="1947" y="418">四 投标响应表及偏差表</text>
<text class="tree" x="1963" y="439">1 响应表</text>
<text class="tree" x="1963" y="460">2 偏差表</text>
<use href="#tri" x="1934" y="481"/><text class="tree" x="1947" y="481">五 报价表</text>
<text class="tree" x="1963" y="502">1 开标一览表</text>
<text class="tree" x="1963" y="523">2 综合报价表</text>
<use href="#tri" x="1934" y="544"/><text class="tree" x="1947" y="544">六 资格审查资料</text>
<use href="#tri" x="1950" y="565"/><text class="tree" x="1963" y="565">1 基本情况表</text>
<text class="tree" x="1980" y="586">1.1 营业执照</text>
<text class="tree" x="1980" y="607">1.2 开户许可证</text>
<text class="tree" x="1980" y="628">1.3 质量管理体系认证证书</text>
<text class="tree" x="1980" y="649">1.4 环境管理体系认证证书</text>
<text class="tree" x="1980" y="670">1.5 职业健康安全管理体系认证...</text>
<use href="#tri" x="1950" y="691"/><text class="tree" x="1963" y="691">2 近年财务状况表</text>
<text class="tree" x="1980" y="712">2.1 2024年度审计报告</text>
<use href="#tri" x="1950" y="733"/><text class="tree" x="1963" y="733">3 近年发生的诉讼及仲裁情况</text>
<text class="tree" x="1980" y="754">3.1 无诉讼</text>
<text class="tree" x="1980" y="775">3.2 无仲裁</text>
<use href="#tri" x="1934" y="796"/><text class="tree" x="1947" y="796">七 技术性能指标的详细描述</text>
<use href="#tri" x="1950" y="817"/><text class="tree" x="1963" y="817">1 技术规格书</text>
<text class="tree" x="1980" y="838">1.1 承诺书</text>
<use href="#tri" x="1934" y="859"/><text class="tree" x="1947" y="859">八 技术支持资料</text>
<use href="#tri" x="1950" y="880"/><text class="tree" x="1963" y="880">1 检测报告</text>
<text class="tree" x="1980" y="901">1.1 检测机构有效资质证明文件</text>
<text class="tree" x="1963" y="922">2 《安全技术说明书》</text>
<use href="#tri" x="1934" y="943"/><text class="tree" x="1947" y="943">九 技术服务和质保期服务计划</text>
<text class="tree" x="1963" y="964">1 质量管理体系</text>
<text class="tree" x="1963" y="985">2 质量保证体系</text>

<!-- ruler right -->
<rect x="2190" y="158" width="27" height="25" fill="#ebebeb"/><rect x="2192" y="160" width="23" height="20" fill="#fff"/><path d="M2201 167V173H2206" stroke="#444" stroke-width="1.500" fill="none"/>
<rect x="2194" y="187" width="17" height="672" fill="#fff"/><rect x="2194" y="187" width="17" height="44" fill="#c6c6c6"/><rect x="2194" y="770" width="17" height="89" fill="#c6c6c6"/>
<g>
<text class="gr" transform="translate(2203,194) rotate(-90)">2</text><text class="gr" transform="translate(2203,267) rotate(-90)">2</text><text class="gr" transform="translate(2203,305) rotate(-90)">4</text><text class="gr" transform="translate(2203,342) rotate(-90)">6</text><text class="gr" transform="translate(2203,379) rotate(-90)">8</text><text class="gr" transform="translate(2203,417) rotate(-90)">10</text><text class="gr" transform="translate(2203,453) rotate(-90)">12</text><text class="gr" transform="translate(2203,490) rotate(-90)">14</text><text class="gr" transform="translate(2203,527) rotate(-90)">16</text><text class="gr" transform="translate(2203,565) rotate(-90)">18</text><text class="gr" transform="translate(2203,603) rotate(-90)">20</text><text class="gr" transform="translate(2203,639) rotate(-90)">22</text><text class="gr" transform="translate(2203,676) rotate(-90)">24</text><text class="gr" transform="translate(2203,714) rotate(-90)">26</text><text class="gr" transform="translate(2203,751) rotate(-90)">28</text><text class="gr" transform="translate(2203,788) rotate(-90)">30</text><text class="gr" transform="translate(2203,825) rotate(-90)">32</text>
</g>
<path d="M2200 202h6M2200 221h6M2200 239h6M2200 258h6M2200 277h6M2200 295h6M2200 314h6M2200 333h6M2200 351h6M2200 370h6M2200 389h6M2200 407h6M2200 426h6M2200 444h6M2200 463h6M2200 481h6M2200 500h6M2200 518h6M2200 537h6M2200 556h6M2200 575h6M2200 593h6M2200 612h6M2200 630h6M2200 649h6M2200 667h6M2200 686h6M2200 705h6M2200 723h6M2200 742h6M2200 760h6M2200 779h6M2200 797h6M2200 816h6M2200 835h6M2200 853h6" stroke="#777"/>
<rect x="2513" y="162" width="1005" height="16" fill="#fff"/><rect x="2513" y="162" width="84" height="16" fill="#c6c6c6"/><rect x="3434" y="162" width="84" height="16" fill="#c6c6c6"/>
<g>
<text class="gr" x="2522" y="170">6</text><text class="gr" x="2547" y="170">4</text><text class="gr" x="2572" y="170">2</text><text class="gr" x="2622" y="170">2</text><text class="gr" x="2647" y="170">4</text><text class="gr" x="2672" y="170">6</text><text class="gr" x="2698" y="170">8</text><text class="gr" x="2723" y="170">10</text><text class="gr" x="2748" y="170">12</text><text class="gr" x="2773" y="170">14</text><text class="gr" x="2798" y="170">16</text><text class="gr" x="2823" y="170">18</text><text class="gr" x="2848" y="170">20</text><text class="gr" x="2873" y="170">22</text><text class="gr" x="2898" y="170">24</text><text class="gr" x="2923" y="170">26</text><text class="gr" x="2948" y="170">28</text><text class="gr" x="2973" y="170">30</text><text class="gr" x="2999" y="170">32</text><text class="gr" x="3024" y="170">34</text><text class="gr" x="3049" y="170">36</text><text class="gr" x="3074" y="170">38</text><text class="gr" x="3099" y="170">40</text><text class="gr" x="3124" y="170">42</text><text class="gr" x="3149" y="170">44</text><text class="gr" x="3174" y="170">46</text><text class="gr" x="3199" y="170">48</text><text class="gr" x="3224" y="170">50</text><text class="gr" x="3249" y="170">52</text><text class="gr" x="3274" y="170">54</text><text class="gr" x="3299" y="170">56</text><text class="gr" x="3325" y="170">58</text><text class="gr" x="3350" y="170">60</text><text class="gr" x="3375" y="170">62</text><text class="gr" x="3400" y="170">64</text><text class="gr" x="3425" y="170">66</text><text class="gr" x="3450" y="170">68</text><text class="gr" x="3475" y="170">70</text><text class="gr" x="3500" y="170">72</text>
</g>
<path d="M2616 160H2628V164L2622 168L2616 164ZM2592 187V178L2597 171L2602 178V187ZM2592 180H2602" fill="#fff" stroke="#999"/><path d="M2635 175V180H2642" stroke="#555" stroke-width="1.500" fill="none"/><path d="M3428 181L3433 171L3439 181Z" fill="#fff" stroke="#999"/>

<!-- right page 1 -->
<rect x="2514.500" y="187" width="1003" height="669" fill="#fff" stroke="#c6c6c6"/>
<rect x="2514.500" y="870" width="1003" height="146" fill="#fff" stroke="#c6c6c6"/>
<path class="cm" d="M2598.500 209V229.500H2578M3435.500 209V229.500H3455M2578 772.500H2598.500V793M3455 772.500H3435.500V793M2598.500 933V953.500H2578M3435.500 933V953.500H3455"/>
<path d="M2598 225.500H3435M2598 949.500H3435" stroke="#808080" stroke-width="1.200"/>
<text class="m b" x="3018" y="217" style="font-size:11px;fill:#7f7f7f;font-family:'Liberation Serif','Noto Serif CJK SC',serif">盘锦德丰实业有限公司</text><use href="#pm" x="3077" y="218"/>
<text class="m b" x="3018" y="941" style="font-size:11px;fill:#7f7f7f;font-family:'Liberation Serif','Noto Serif CJK SC',serif">盘锦德丰实业有限公司</text><use href="#pm" x="3077" y="942"/>
<rect x="2591" y="246" width="4" height="5" fill="#000"/><text class="h" x="2601" y="243" textLength="81" lengthAdjust="spacingAndGlyphs">五 报价表</text><use href="#pm" x="2687" y="243"/>
<rect x="2591" y="283" width="4" height="5" fill="#000"/><text class="h" x="2600" y="280" textLength="103" lengthAdjust="spacingAndGlyphs">1 开标一览表</text><use href="#pm" x="2708" y="280"/>
<use href="#pm" x="2603" y="313"/>
<text class="s" x="2600" y="335">项目名称：</text>
<text class="s b" x="2662" y="335" textLength="517" lengthAdjust="spacingAndGlyphs">2025年二级物资集中采购A17大类聚氧丙烯聚氧乙烯十八醇醚（JC2025-WⅡ-A17-81）招标项目</text><use href="#pm" x="3182" y="335"/>
<path d="M2662 342.500H3179" class="k"/><path d="M2871 344.500H2944" stroke="#2b62cc" fill="none"/>
<text class="s" x="2600" y="363">招标编号：</text>
<text class="s b" x="2662" y="363" textLength="341" lengthAdjust="spacingAndGlyphs">LHYTWZGS2510-ZBGK0009-LHYTWZGS2014-B2957701505253-2013</text><use href="#pm" x="3007" y="363"/>
<path d="M2662 370.500H3003" class="k"/>
<text class="s" x="2600" y="391">投标货币：</text><text class="s m" x="2724" y="391">人民币</text><path d="M2662 397.500H2793" class="k"/>
<text class="s" x="2806" y="391">货币单位：</text><text class="s m" x="2888" y="391">元</text><path d="M2870 397.500H2950" class="k"/><use href="#pm" x="2954" y="391"/>
<use href="#pm" x="2603" y="414"/>
<path class="kk" d="M2598 424.500H3435M2598 465H3435M2598 508.500H3435"/>
<path class="k" d="M2598.500 424V508M2690.500 424V508M2807.500 424V508M2978.500 424V508M3135.500 424V508M3245.500 424V508M3396.500 424V508M3435.500 424V508"/>
<text class="s m" x="2645" y="446">包号</text><text class="s m" x="2750" y="446">投标人名称</text><text class="s m" x="2893" y="446">价格条件</text><text class="s m" x="3056" y="446">投标总价</text><text class="s m" x="3191" y="446">投标保证金金额</text><text class="s m" x="3321" y="446">交货期</text><text class="s m" x="3416" y="446">备注</text>
<path d="M2633 453.500H2658M2718 453.500H2782M2868 453.500H2918M3031 453.500H3081M3146 453.500H3235M3303 453.500H3340M3404 453.500H3428" stroke="#e03030" stroke-width="1.500" stroke-dasharray="1.500 1" fill="none"/>
<use href="#pm" x="2662" y="446"/><use href="#pm" x="2785" y="446"/><use href="#pm" x="2921" y="446"/><use href="#pm" x="3084" y="446"/><use href="#pm" x="3238" y="446"/><use href="#pm" x="3343" y="446"/><use href="#pm" x="3441" y="436"/><use href="#pm" x="3441" y="477"/>
<text class="s b m" x="2645" y="477" textLength="70" lengthAdjust="spacingAndGlyphs">JC2025-WⅡ-</text><text class="s b m" x="2645" y="498">A17-81</text><use href="#pm" x="2668" y="498"/>
<text class="s b m" x="2750" y="477">盘锦德丰实业有限</text><text class="s b m" x="2750" y="498">公司</text><use href="#pm" x="2767" y="498"/>
<text class="s m" x="2893" y="477" textLength="137">出厂价（含增值税）或者</text><use href="#pm" x="2966" y="477"/><text class="s m" x="2893" y="498">货物运抵现场总价</text><use href="#pm" x="2947" y="498"/>
<use href="#pm" x="3060" y="487"/><text class="s b m" x="3191" y="487">20000.00</text><use href="#pm" x="3219" y="487"/>
<text class="s b m" x="3321" y="487">2027年12月30日</text><use href="#pm" x="3369" y="487"/><use href="#pm" x="3420" y="487"/>
<use href="#pm" x="2603" y="523"/>
<path class="kk" d="M2598 537.500H3435M2598 566.500H3435M2598 594.500H3435M2598 622.500H3435"/>
<path class="k" d="M2598.500 537V622M3016.500 537V622M3435.500 537V622"/>
<text class="s m" x="2809" y="552">开标内容</text><use href="#pm" x="2838" y="552"/><text class="s m" x="3227" y="552">开标要求</text><use href="#pm" x="3256" y="552"/>
<text class="s m" x="2809" y="580">投标总价</text><use href="#pm" x="2838" y="580"/><use href="#pm" x="3230" y="580"/>
<text class="s m" x="2809" y="609">交货期</text><use href="#pm" x="2832" y="609"/><text class="s b m" x="3227" y="609">2027年12月30日</text><use href="#pm" x="3275" y="609"/>
<use href="#pm" x="3441" y="522"/><use href="#pm" x="3441" y="552"/><use href="#pm" x="3441" y="606"/>
<use href="#pm" x="2603" y="638"/>
<text class="s" x="2624" y="660" textLength="718" lengthAdjust="spacingAndGlyphs">注：1.如投标人所报价格中含优惠条件（折扣），投标人应以书面形式说明，并在此表备注栏中注明有折扣，否则评标时不予考虑。</text><use href="#pm" x="3349" y="660"/>
<text class="s" x="2624" y="685" textLength="441" lengthAdjust="spacingAndGlyphs">2.分别按包报价，按包独立做完整的报价表（包括开标一览表、综合报价表等）。</text><use href="#pm" x="3073" y="685"/>
<text class="s" x="2624" y="708" textLength="177" lengthAdjust="spacingAndGlyphs">（如标包较多时也可将表格合并）</text><use href="#pm" x="2810" y="708"/>
<text class="s" x="2624" y="733" textLength="357" lengthAdjust="spacingAndGlyphs">3.3.集中采购项目：开标一览表总价=∑（各物料单价×数量 1）。</text><use href="#pm" x="2989" y="733"/>
<g fill="none" stroke="#2b62cc"><path d="M2776 667.500H2812M2776 666H2812M3058 667.500H3094M3058 666H3094M2638 692.500H2712M2638 691H2712M2725 692.500H2775M2725 691H2775M2630 716.500H2668M2630 715H2668"/></g>
<rect x="2604" y="743.500" width="411" height="27" fill="none" stroke="#cf1224" stroke-width="3.500"/><use href="#pm" x="2775" y="760"/>
<text class="m" x="3018" y="791" style="font-family:'Liberation Serif';font-size:11px;fill:#777">17</text>
<use href="#stamp" transform="translate(2685,480)"/>
<!-- page 2 -->
<rect x="2591" y="970" width="4" height="5" fill="#000"/><text class="h" x="2599" y="967" textLength="104" lengthAdjust="spacingAndGlyphs">2 综合报价表</text><use href="#pm" x="2709" y="967"/>
<use href="#pm" x="2603" y="999"/>
<g style="mix-blend-mode:multiply">
<path d="M2665.700 1016A65 69 0 0 1 2794.300 1016" fill="none" stroke="#e8262c" stroke-width="3"/>
<path id="arc2" d="M2688 1016A43 45 0 0 1 2772 1016" fill="none"/>
<text style="font-size:17px;fill:#ee6a70;font-family:'Noto Serif CJK SC',serif;dominant-baseline:auto"><textPath href="#arc2" startOffset="4%" letter-spacing="2">德丰实业有限</textPath></text>
<polygon points="2730,1006 2735,1016 2725,1016" fill="#e83a40"/>
</g>
<!-- watermark -->
<text x="3543" y="955" style="font-size:21px;fill:#c2c2c2">激活 Windows</text>
<text x="3543" y="978" style="font-size:14px;fill:#c2c2c2">转到“设置”以激活 Windows。</text>

<!-- right status -->
<rect x="1912" y="1016" width="1888" height="14" fill="#f3f3f3"/><path class="l" d="M1912 1016H3800"/>
<text x="1924" y="1025">第 17 页，共 197 页</text><text x="2054" y="1025">138/24411 个字</text>
<path d="M2163 1019H2170V1030M2163 1019V1030M2170 1019L2176 1022V1030" fill="none" stroke="#666"/>
<text x="2194" y="1025">简体中文(中国大陆)</text><text x="2316" y="1025">修订: 关闭</text>
<path d="M2391 1025a5 5 0 1 1 5 4" fill="none" stroke="#555"/><text x="2409" y="1025">辅助功能: 调查</text>
<path d="M3540 1020H3552V1030M3540 1020V1030M3546 1020V1030" fill="none" stroke="#666"/>
<rect x="3567" y="1017" width="40" height="13" fill="#c6c6c6"/><path d="M3581 1030V1020H3593V1030M3583 1023H3591M3583 1026H3591" fill="none" stroke="#555"/>
<path d="M3620 1030V1020H3632M3622 1023H3630" fill="none" stroke="#666"/>
<path d="M3653 1027H3661M3666 1027H3766M3771 1027H3779M3775 1023V1030" stroke="#444"/><rect x="3710" y="1021" width="5" height="9" fill="#444"/><path d="M3716 1024V1030" stroke="#444"/>
<text x="3792" y="1025">9</text>
</svg>
</body></html>
